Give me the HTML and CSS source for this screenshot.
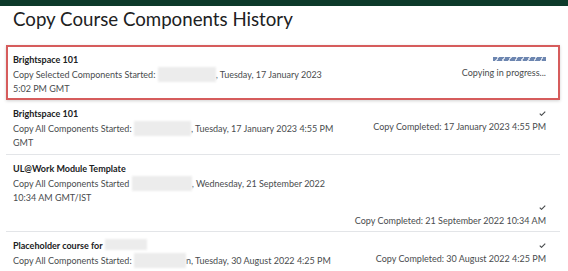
FILE: index.html
```html
<!DOCTYPE html>
<html lang="en">
<head>
<meta charset="utf-8">
<title>Copy Course Components History</title>
<link rel="stylesheet" href="styles.css">
</head>
<body>
<div class="topbar"></div>
<h1 class="title">Copy Course Components History</h1>
<ul class="history">
  <li class="item item-active">
    <div class="info">
      <div class="name">Brightspace 101</div>
      <div class="desc">Copy Selected Components Started: <span class="redact r-58"></span>, Tuesday, 17 January 2023<br>5:02 PM GMT</div>
    </div>
    <div class="status">
      <div class="status-icon"><span class="progress"></span></div>
      <div class="status-text">Copying in progress...</div>
    </div>
  </li>
  <li class="item">
    <div class="info">
      <div class="name">Brightspace 101</div>
      <div class="desc">Copy All Components Started: <span class="redact r-57"></span>, Tuesday, 17 January 2023 4:55 PM<br>GMT</div>
    </div>
    <div class="status">
      <div class="status-icon"><svg class="check" viewBox="0 0 8 6" width="7" height="5"><polyline points="0.7,3.2 2.8,5.2 7.3,0.7" fill="none" stroke="#494c4e" stroke-width="1.4"/></svg></div>
      <div class="status-text">Copy Completed: 17 January 2023 4:55 PM</div>
    </div>
  </li>
  <li class="item item-wrap">
    <div class="info">
      <div class="name">UL@Work Module Template</div>
      <div class="desc">Copy All Components Started <span class="redact r-60"></span>, Wednesday, 21 September 2022<br>10:34 AM GMT/IST</div>
    </div>
    <div class="status">
      <div class="status-icon"><svg class="check" viewBox="0 0 8 6" width="7" height="5"><polyline points="0.7,3.2 2.8,5.2 7.3,0.7" fill="none" stroke="#494c4e" stroke-width="1.4"/></svg></div>
      <div class="status-text">Copy Completed: 21 September 2022 10:34 AM</div>
    </div>
  </li>
  <li class="item">
    <div class="info">
      <div class="name">Placeholder course for <span class="redact r-42"></span></div>
      <div class="desc">Copy All Components Started: <span class="redact r-52"></span>n, Tuesday, 30 August 2022 4:25 PM<br>GMT/IST</div>
    </div>
    <div class="status">
      <div class="status-icon"><svg class="check" viewBox="0 0 8 6" width="7" height="5"><polyline points="0.7,3.2 2.8,5.2 7.3,0.7" fill="none" stroke="#494c4e" stroke-width="1.4"/></svg></div>
      <div class="status-text">Copy Completed: 30 August 2022 4:25 PM</div>
    </div>
  </li>
</ul>
</body>
</html>
```
FILE: styles.css
```css
html, body {
  margin: 0;
  padding: 0;
  background: #ffffff;
}
body {
  font-family: Lato, "Open Sans", sans-serif;
  color: #494c4e;
  overflow: hidden;
}
.topbar {
  height: 6px;
  background: #0d3a2a;
}
.title {
  margin: 2px 0 15px 13px;
  font-size: 18.7px;
  line-height: 22px;
  font-weight: 400;
  color: #202122;
}
.history {
  list-style: none;
  margin: 0 8px 0 6px;
  padding: 0;
}
.item {
  display: flex;
  justify-content: space-between;
  align-items: flex-start;
  padding: 7px 14px 4px 7px;
  border-bottom: 1px solid #e3e5e8;
  font-size: 9px;
  line-height: 14px;
}
.item-active {
  padding-top: 8px;
  border-bottom: none;
  box-shadow: inset 0 0 0 2px #d65c5c, 0 1px 3px rgba(0,0,0,0.18);
}
.item-wrap {
  flex-wrap: wrap;
  justify-content: flex-end;
  padding-bottom: 3px;
}
.item-wrap .info {
  flex: 0 0 100%;
}
.item-wrap .status {
  margin-top: -4px;
}
.info {
  flex: 0 1 auto;
  white-space: nowrap;
}
.name {
  font-weight: 700;
  color: #202122;
}
.redact {
  display: inline-block;
  height: 15px;
  vertical-align: -4px;
  background: #ececec;
  filter: blur(1px);
}
.r-58 { width: 58px; }
.r-57 { width: 57px; }
.r-60 { width: 60px; }
.r-52 { width: 52px; }
.r-42 { width: 42px; height: 11px; vertical-align: -1px; }
.status {
  display: flex;
  flex-direction: column;
  align-items: flex-end;
  white-space: nowrap;
}
.status-icon {
  height: 13px;
  display: flex;
  align-items: center;
}
.progress {
  display: block;
  width: 53px;
  height: 4px;
  margin-top: -1px;
  background: repeating-linear-gradient(-60deg, #6d86b0 0 4px, #d3dbe9 4px 5.5px);
}
.check {
  display: block;
}
```
